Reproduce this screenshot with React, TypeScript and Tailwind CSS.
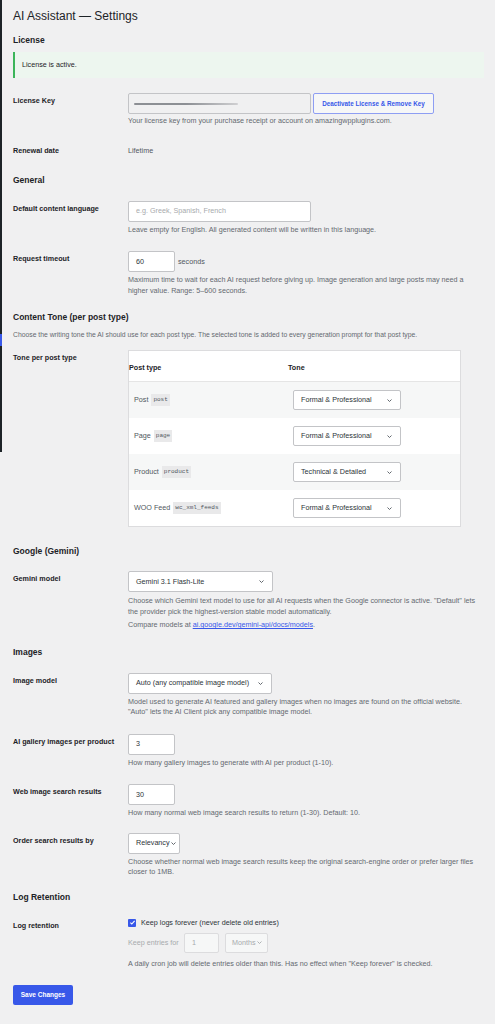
import React from "react";

const Chevron = ({ className = "" }: { className?: string }) => (
  <svg viewBox="0 0 10 6" className={"w-[5px] h-[3px] " + className}>
    <path d="M1 1l4 4 4-4" stroke="currentColor" strokeWidth="1.8" fill="none" />
  </svg>
);

const Select = ({ value, className = "" }: { value: string; className?: string }) => (
  <div
    className={
      "flex items-center justify-between bg-white border border-[#c3c4c7] rounded-[2px] pl-[7px] pr-[8px] text-[#2c3338] " +
      className
    }
  >
    <span className="whitespace-nowrap">{value}</span>
    <Chevron className="text-[#50575e] shrink-0" />
  </div>
);

const NumInput = ({ value }: { value: string }) => (
  <div className="w-[47px] h-[21px] bg-white border border-[#c3c4c7] rounded-[2px] flex items-center pl-[7px] text-[#2c3338]">
    {value}
  </div>
);

const Help = ({ children, className = "mt-[3px]" }: { children: React.ReactNode; className?: string }) => (
  <p className={"text-[#646970] leading-[10.5px] " + className}>{children}</p>
);

const Row = ({ label, className, children }: { label: string; className: string; children: React.ReactNode }) => (
  <div className={"flex " + className}>
    <div className="w-[115px] shrink-0 pt-[3px] font-bold text-[#1d2327] leading-[10px]">{label}</div>
    <div className="flex-1 min-w-0">{children}</div>
  </div>
);

const Heading = ({ children, className }: { children: React.ReactNode; className: string }) => (
  <h2 className={"text-[8.5px] leading-[12px] font-bold text-[#1d2327] " + className}>{children}</h2>
);

const Code = ({ children }: { children: React.ReactNode }) => (
  <code className="ml-[3px] bg-[#e9e9ea] px-[2px] py-[1px] font-['Liberation_Mono',monospace] text-[6px] text-[#50575e]">
    {children}
  </code>
);

const tones = [
  { name: "Post", slug: "post", tone: "Formal & Professional" },
  { name: "Page", slug: "page", tone: "Formal & Professional" },
  { name: "Product", slug: "product", tone: "Technical & Detailed" },
  { name: "WOO Feed", slug: "wc_xml_feeds", tone: "Formal & Professional" },
];

export default function App() {
  return (
    <div className="flex min-h-[1024px] bg-[#f0f0f1] font-['Liberation_Sans',Arial,sans-serif] text-[7.2px] leading-[10px]">
      {/* admin menu edge */}
      <div className="w-[2px] h-[452px] shrink-0 bg-[#1d2327] flex flex-col">
        <div className="h-[334px]" />
        <div className="h-[12px] bg-[#3858e9]" />
      </div>

      <div className="flex-1 pl-[11px] pr-[11px] pt-[8px] pb-[16px]">
        <h1 className="text-[12px] leading-[16px] text-[#1d2327]">AI Assistant — Settings</h1>

        <Heading className="mt-[10px]">License</Heading>
        <div className="mt-[6px] h-[26px] flex items-center bg-[#edf6ef] border-l-[2px] border-[#3cb55a] pl-[7px] text-[#1d2327]">
          License is active.
        </div>

        <Row label="License Key" className="mt-[15px]">
          <div className="flex gap-[2px]">
            <div className="w-[183px] h-[21px] border border-[#c3c4c7] rounded-[2px] bg-[#f0f0f1] flex items-center pl-[5px]">
              <div className="h-[2px] w-[104px] rounded-full bg-gradient-to-r from-[#8c8f94] via-[#8c8f94] to-[#d0d0d2] blur-[0.4px]" />
            </div>
            <div className="w-[121px] h-[21px] border border-[#8e9ef3] rounded-[2px] bg-[#f6f7f7] flex items-center justify-center text-[#3858e9] font-bold text-[6.3px]">
              Deactivate License &amp; Remove Key
            </div>
          </div>
          <Help className="mt-[2px]">Your license key from your purchase receipt or account on amazingwpplugins.com.</Help>
        </Row>

        <div className="flex mt-[19px]">
          <div className="w-[115px] shrink-0 font-bold text-[#1d2327]">Renewal date</div>
          <div className="text-[#50575e]">Lifetime</div>
        </div>

        <Heading className="mt-[18px]">General</Heading>

        <Row label="Default content language" className="mt-[15px]">
          <div className="w-[183px] h-[21px] bg-white border border-[#c3c4c7] rounded-[2px] flex items-center pl-[7px] text-[#a7aaad]">
            e.g. Greek, Spanish, French
          </div>
          <Help>Leave empty for English. All generated content will be written in this language.</Help>
        </Row>

        <Row label="Request timeout" className="mt-[16px]">
          <div className="flex items-center gap-[3px]">
            <NumInput value="60" />
            <span className="text-[#50575e]">seconds</span>
          </div>
          <Help>
            Maximum time to wait for each AI request before giving up. Image generation and large posts may need a
            <br />
            higher value. Range: 5–600 seconds.
          </Help>
        </Row>

        <Heading className="mt-[15px]">Content Tone (per post type)</Heading>
        <p className="mt-[7px] text-[6.8px] text-[#646970]">
          Choose the writing tone the AI should use for each post type. The selected tone is added to every generation prompt for that post type.
        </p>

        <Row label="Tone per post type" className="mt-[10px]">
          <div className="w-[333px] border border-[#dcdcde] bg-white">
            <div className="grid grid-cols-[159px_1fr] h-[31px] items-center pt-[4px] border-b border-[#e5e5e5] font-bold text-[#1d2327]">
              <span>Post type</span>
              <span>Tone</span>
            </div>
            {tones.map((t, i) => (
              <div
                key={t.slug}
                className={
                  "grid grid-cols-[159px_1fr] h-[36px] items-center " + (i % 2 === 0 ? "bg-[#f6f7f7]" : "bg-white")
                }
              >
                <div className="pl-[5px] text-[#50575e] flex items-center">
                  {t.name}
                  <Code>{t.slug}</Code>
                </div>
                <div className="pl-[5px]">
                  <Select value={t.tone} className="w-[108px] h-[20px]" />
                </div>
              </div>
            ))}
          </div>
        </Row>

        <Heading className="mt-[18px]">Google (Gemini)</Heading>

        <Row label="Gemini model" className="mt-[14px]">
          <Select value="Gemini 3.1 Flash-Lite" className="w-[145px] h-[21px]" />
          <Help className="mt-[4px]">
            Choose which Gemini text model to use for all AI requests when the Google connector is active. "Default" lets
            <br />
            the provider pick the highest-version stable model automatically.
          </Help>
          <Help className="mt-[3px]">
            Compare models at{" "}
            <a className="text-[#3858e9] underline">ai.google.dev/gemini-api/docs/models</a>.
          </Help>
        </Row>

        <Heading className="mt-[15px]">Images</Heading>

        <Row label="Image model" className="mt-[15px]">
          <Select value="Auto (any compatible image model)" className="w-[144px] h-[21px]" />
          <Help>
            Model used to generate AI featured and gallery images when no images are found on the official website.
            <br />
            "Auto" lets the AI Client pick any compatible image model.
          </Help>
        </Row>

        <Row label="AI gallery images per product" className="mt-[16px]">
          <NumInput value="3" />
          <Help>How many gallery images to generate with AI per product (1-10).</Help>
        </Row>

        <Row label="Web image search results" className="mt-[16px]">
          <NumInput value="30" />
          <Help>How many normal web image search results to return (1-30). Default: 10.</Help>
        </Row>

        <Row label="Order search results by" className="mt-[14px]">
          <div className="w-[52px] h-[21px] bg-white border border-[#c3c4c7] rounded-[2px] flex items-center pl-[7px] gap-[1px] text-[#2c3338]">
            Relevancy
            <Chevron className="text-[#50575e]" />
          </div>
          <Help>
            Choose whether normal web image search results keep the original search-engine order or prefer larger files
            <br />
            closer to 1MB.
          </Help>
        </Row>

        <Heading className="mt-[13px]">Log Retention</Heading>

        <Row label="Log retention" className="mt-[15px]">
          <div className="flex items-center gap-[5px] text-[#2c3338]">
            <span className="w-[8px] h-[8px] rounded-[1px] bg-[#3858e9] flex items-center justify-center">
              <svg viewBox="0 0 10 10" className="w-[7px] h-[7px]">
                <path d="M2 5.2l2 2 4-4.4" stroke="white" strokeWidth="1.6" fill="none" />
              </svg>
            </span>
            Keep logs forever (never delete old entries)
          </div>
          <div className="mt-[5px] flex items-center text-[#a7aaad]">
            <span className="w-[56px]">Keep entries for</span>
            <div className="w-[35px] h-[20px] border border-[#dcdcde] rounded-[2px] bg-[#f6f7f7] flex items-center pl-[7px]">1</div>
            <div className="ml-[6px] w-[43px] h-[20px] border border-[#dcdcde] rounded-[2px] bg-[#f6f7f7] flex items-center pl-[6px] gap-[1px]">
              Months
              <Chevron />
            </div>
          </div>
          <Help className="mt-[6px]">A daily cron job will delete entries older than this. Has no effect when "Keep forever" is checked.</Help>
        </Row>

        <button className="mt-[16px] w-[60px] h-[20px] rounded-[2px] bg-[#3858e9] text-white font-bold text-[6.5px]">
          Save Changes
        </button>
      </div>
    </div>
  );
}
